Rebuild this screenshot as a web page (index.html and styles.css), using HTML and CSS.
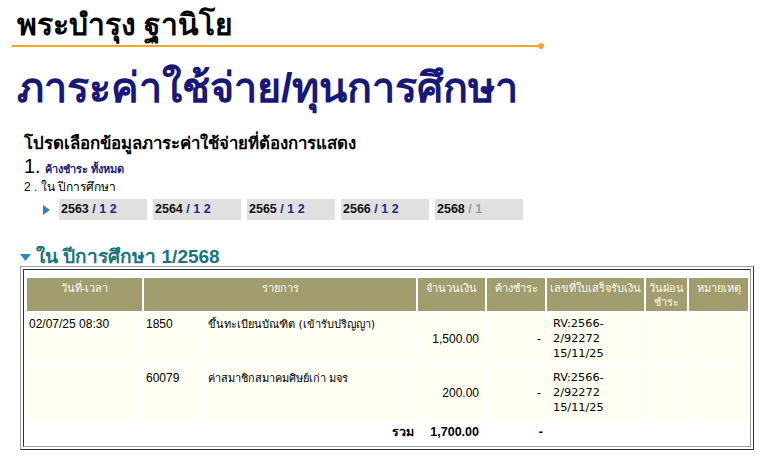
FILE: index.html
```html
<!DOCTYPE html>
<html lang="th">
<head>
<meta charset="utf-8">
<title>ภาระค่าใช้จ่าย/ทุนการศึกษา</title>
<link rel="stylesheet" href="styles.css">
</head>
<body>
<div class="page">
  <h1 class="name">พระบำรุง ฐานิโย</h1>
  <div class="rule"><span class="line"></span><span class="dot"></span></div>
  <h2 class="title">ภาระค่าใช้จ่าย/ทุนการศึกษา</h2>

  <div class="select">
    <h3 class="prompt">โปรดเลือกข้อมูลภาระค่าใช้จ่ายที่ต้องการแสดง</h3>
    <div class="opt1"><span class="num">1.</span> <a class="all" href="#">ค้างชำระ ทั้งหมด</a></div>
    <div class="opt2">2 . ใน ปีการศึกษา</div>
    <div class="years">
      <svg class="tri" width="7" height="10" viewBox="0 0 7 10"><path d="M0 0 L7 5 L0 10 Z" fill="#2b83c6"/></svg>
      <div class="year"><b>2563</b> <span class="sl">/</span> <a href="#">1</a> <a href="#">2</a></div>
      <div class="year"><b>2564</b> <span class="sl">/</span> <a href="#">1</a> <a href="#">2</a></div>
      <div class="year"><b>2565</b> <span class="sl">/</span> <a href="#">1</a> <a href="#">2</a></div>
      <div class="year"><b>2566</b> <span class="sl">/</span> <a href="#">1</a> <a href="#">2</a></div>
      <div class="year"><b>2568</b> <span class="sl grey">/</span> <span class="grey">1</span></div>
    </div>
  </div>

  <h3 class="sec"><svg class="down" width="11" height="7" viewBox="0 0 11 7"><path d="M0 0 L11 0 L5.5 7 Z" fill="#2a8bbd"/></svg>ใน ปีการศึกษา 1/2568</h3>

  <div class="box">
    <div class="inner">
      <table class="tbl">
        <colgroup>
          <col class="c1"><col class="c2"><col class="c3"><col class="c4"><col class="c5"><col class="c6"><col class="c7"><col class="c8">
        </colgroup>
        <thead>
          <tr>
            <th>วันที่-เวลา</th>
            <th colspan="2">รายการ</th>
            <th>จำนวนเงิน</th>
            <th>ค้างชำระ</th>
            <th>เลขที่ใบเสร็จรับเงิน</th>
            <th>วันผ่อน<br>ชำระ</th>
            <th>หมายเหตุ</th>
          </tr>
        </thead>
        <tbody>
          <tr class="item">
            <td class="dt">02/07/25 08:30</td>
            <td class="code">1850</td>
            <td class="desc">ขึ้นทะเบียนบัณฑิต (เข้ารับปริญญา)</td>
            <td class="amt">1,500.00</td>
            <td class="due">-</td>
            <td class="rcpt">RV:2566-<br>2/92272<br>15/11/25</td>
            <td></td>
            <td></td>
          </tr>
          <tr class="item">
            <td class="dt"></td>
            <td class="code">60079</td>
            <td class="desc">ค่าสมาชิกสมาคมศิษย์เก่า มจร</td>
            <td class="amt">200.00</td>
            <td class="due">-</td>
            <td class="rcpt">RV:2566-<br>2/92272<br>15/11/25</td>
            <td></td>
            <td></td>
          </tr>
          <tr class="total">
            <td colspan="3" class="lbl">รวม</td>
            <td class="amt">1,700.00</td>
            <td class="due">-</td>
            <td></td>
            <td></td>
            <td></td>
          </tr>
        </tbody>
      </table>
    </div>
  </div>
</div>
</body>
</html>
```

FILE: styles.css
```css
* { box-sizing: border-box; }
html, body { margin: 0; padding: 0; background: #ffffff; }
body {
  font-family: "Liberation Sans", Arial, sans-serif;
  color: #000;
  width: 770px;
  height: 462px;
  overflow: hidden;
}
.page { padding-top: 7px; }

.name {
  margin: 0 0 0 17px;
  font-size: 30px;
  line-height: 36px;
  font-weight: bold;
  color: #000;
}

.rule {
  display: flex;
  align-items: center;
  margin: 0 0 0 12px;
  width: 532px;
  height: 6px;
}
.rule .line { flex: 1; height: 2px; background: #f6a623; }
.rule .dot { width: 6px; height: 6px; border-radius: 50%; background: #f6a623; margin-left: -2px; }

.title {
  margin: 10px 0 0 17px;
  font-size: 41.3px;
  line-height: 58px;
  font-weight: bold;
  color: #18187a;
}

.select { margin: 15px 0 0 24px; }
.prompt {
  margin: 0;
  font-size: 16.8px;
  line-height: 24px;
  font-weight: bold;
}
.opt1 { display: flex; align-items: baseline; gap: 4px; height: 20px; }
.opt1 .num { font-size: 20px; line-height: 20px; }
.opt1 .all { color: #1b1b7d; font-size: 11px; font-weight: bold; text-decoration: none; }
.opt2 { font-size: 12px; line-height: 18px; margin-top: 2px; }

.years {
  display: flex;
  align-items: center;
  gap: 6px;
  margin: 3px 0 0 19px;
}
.years .tri { margin-right: 3px; }
.year {
  width: 88px;
  height: 21px;
  background: #e0e0e0;
  font-size: 12.5px;
  font-weight: bold;
  line-height: 21px;
  padding-left: 2px;
  white-space: nowrap;
}
.year b { color: #111; }
.year a, .year .sl { color: #1b2a8e; text-decoration: none; }
.year .grey { color: #9a9a9a; }

.sec {
  display: flex;
  align-items: center;
  gap: 5px;
  margin: 25px 0 0 20px;
  font-size: 19px;
  line-height: 24px;
  font-weight: bold;
  color: #17767e;
}

.box {
  margin: -3px 0 0 20px;
  width: 734px;
  border: 1px solid;
  border-color: #a0a0a0 #303030 #303030 #a0a0a0;
  padding: 2px;
}
.inner {
  border: 1px solid;
  border-color: #303030 #a0a0a0 #a0a0a0 #303030;
  padding: 6px 0 1px 1px;
}
.tbl {
  border-collapse: separate;
  border-spacing: 2px;
  table-layout: fixed;
  width: 725px;
}
.c1 { width: 115px; }
.c2 { width: 62px; }
.c3 { width: 208px; }
.c4 { width: 67px; }
.c5 { width: 58px; }
.c6 { width: 97px; }
.c7 { width: 41px; }
.c8 { width: 59px; }

.tbl th {
  background: #a19d6f;
  color: #fbfbef;
  font-family: "DejaVu Sans", Tahoma, sans-serif;
  font-weight: normal;
  font-size: 11px;
  line-height: 14px;
  vertical-align: top;
  height: 33px;
  padding: 4px 1px 1px;
  text-align: center;
}
.tbl td {
  font-size: 12px;
  line-height: 15px;
  padding: 4px 2px 3px;
  vertical-align: top;
}
.item td { background: #fffef3; height: 52px; }
.item td.amt { vertical-align: middle; text-align: right; padding-right: 6px; }
.item td.due { vertical-align: middle; text-align: right; padding-right: 4px; }
.tbl td.desc { font-family: "DejaVu Sans", Tahoma, sans-serif; font-size: 11px; padding-left: 0; }
.tbl td.rcpt { font-family: "DejaVu Sans", Tahoma, sans-serif; font-size: 11.3px; padding-left: 6px; padding-top: 3px; }
.total td { height: 22px; vertical-align: middle; font-weight: bold; font-size: 12.5px; padding-top: 2px; padding-bottom: 2px; }
.total .lbl { text-align: right; padding-right: 2px; }
.total .amt { text-align: right; padding-right: 6px; }
.total .due { text-align: right; padding-right: 2px; }
```
